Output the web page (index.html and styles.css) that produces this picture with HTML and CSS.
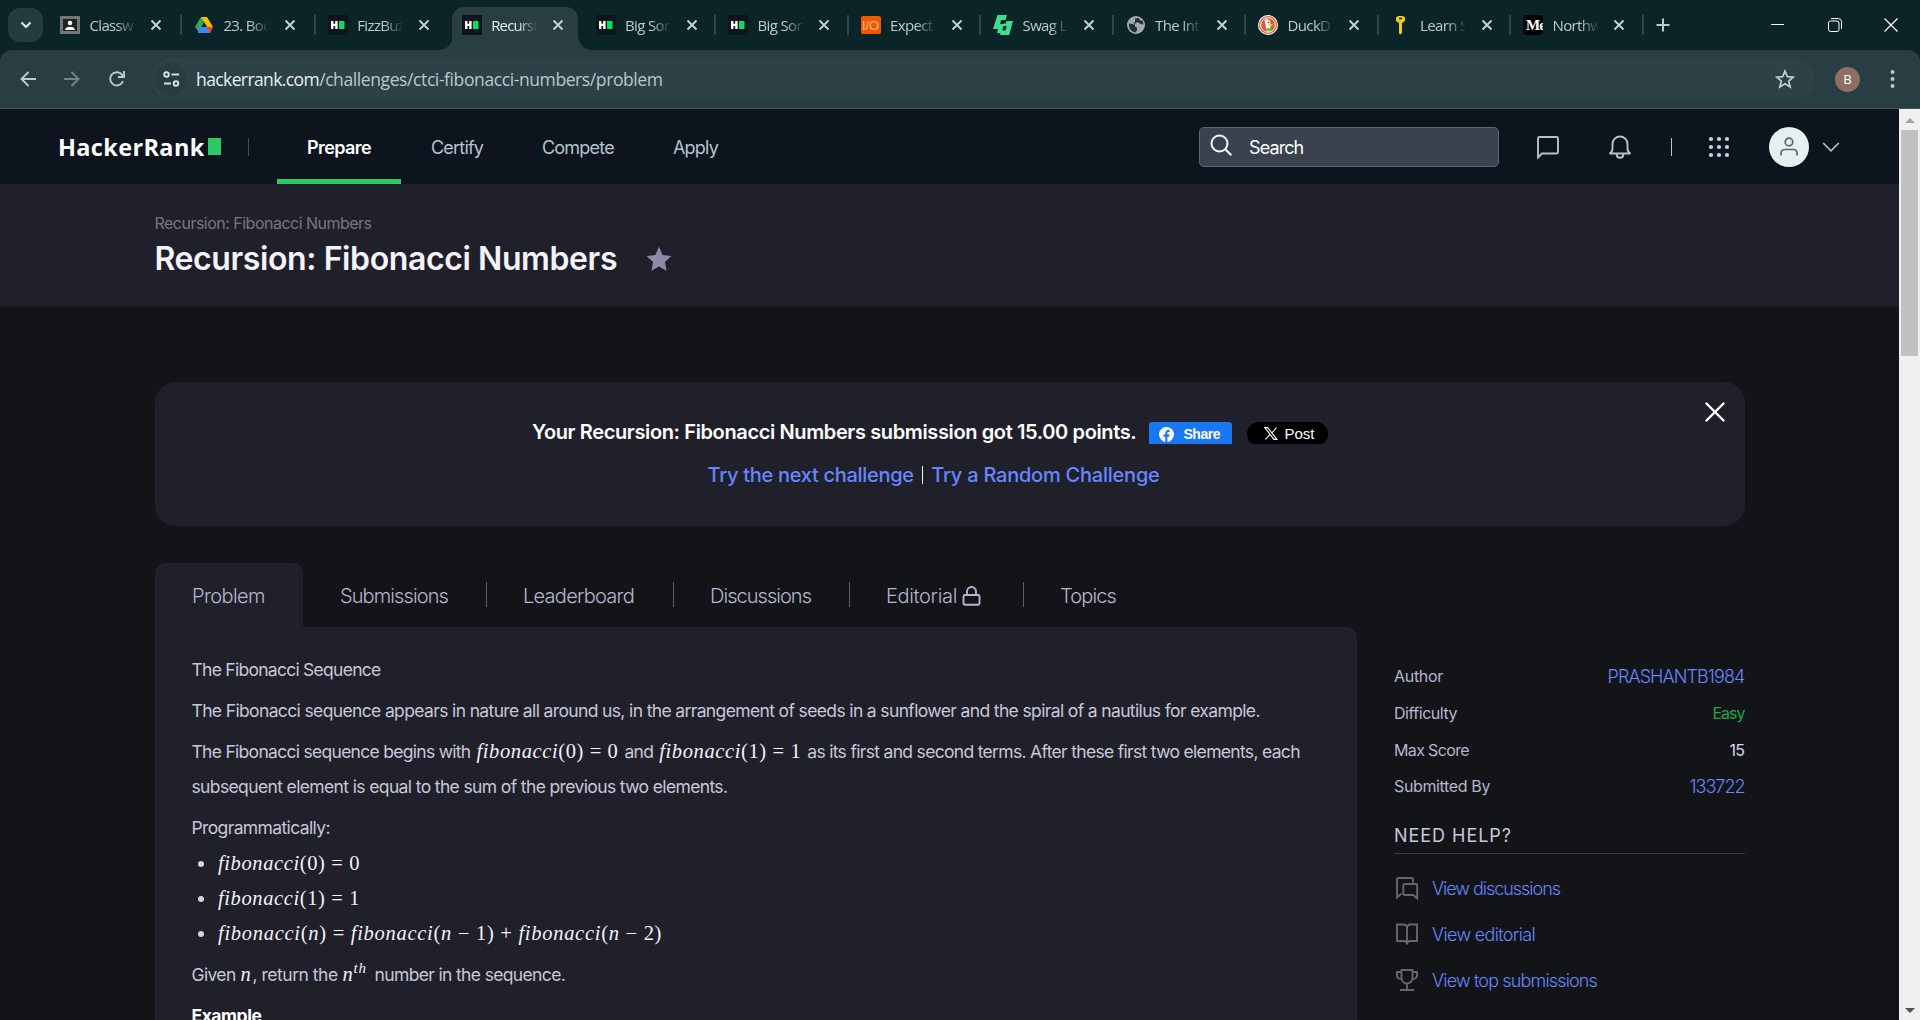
FILE: index.html
```html
<!DOCTYPE html>
<html lang="en">
<head>
<meta charset="utf-8">
<title>Recursion: Fibonacci Numbers | HackerRank</title>
<link rel="stylesheet" href="styles.css">
</head>
<body>
<svg class="defs" width="0" height="0">
  <symbol id="x" viewBox="0 0 12 12"><path d="M1.5 1.5l9 9M10.5 1.5l-9 9" stroke="currentColor" stroke-width="1.9" fill="none"/></symbol>
  <symbol id="hr" viewBox="0 0 20 20"><path fill="#0d141e" d="M0 0h20v20H0z"/><path fill="#fff" d="M3 6h2.4v2.8h1.8V6h2.4v8H7.200v-3H5.400v3H3z"/><path fill="#05e35e" d="M11 6h5.500v8H11z"/></symbol>
</svg>
<header class="browser">
  <div class="strip">
    <button class="menu"><svg width="12" height="8" viewBox="0 0 12 8"><path d="M1.500 1.500L6 6l4.500-4.500" fill="none" stroke="currentColor" stroke-width="2"/></svg></button>
    <div class="tabs">
      <div class="tab"><svg class="fav" viewBox="0 0 20 20"><path fill="#737679" d="M0 1h20v18H0z"/><path fill="#222" d="M3 4h14v12H3z"/><circle cx="10" cy="8" r="2.300" fill="#fff"/><path fill="#fff" d="M5 15c0-4.500 10-4.500 10 0z"/></svg><span class="name">Classw</span><svg class="close"><use href="#x"/></svg></div>
      <div class="tab"><svg class="fav" viewBox="0 0 20 20"><path fill="#34a853" d="M7 2h6L5.500 18 1 12z"/><path fill="#188038" d="M7 2h6l-3 5.500z"/><path fill="#fbbc04" d="M7 2h6l6 10h-6z"/><path fill="#4285f4" d="M4 12h15l-3 6H4z"/><path fill="#ea4335" d="M13 12h6l-3 6z"/><path fill="#0b2428" d="M10 7.500l2.800 4.500H7.200z"/></svg><span class="name">23. Boo</span><svg class="close"><use href="#x"/></svg></div>
      <div class="tab nosep"><svg class="fav"><use href="#hr"/></svg><span class="name">FizzBuz</span><svg class="close"><use href="#x"/></svg></div>
      <div class="tab active"><svg class="fav"><use href="#hr"/></svg><span class="name">Recursi</span><svg class="close"><use href="#x"/></svg></div>
      <div class="tab"><svg class="fav"><use href="#hr"/></svg><span class="name">Big Sor</span><svg class="close"><use href="#x"/></svg></div>
      <div class="tab"><svg class="fav"><use href="#hr"/></svg><span class="name">Big Sor</span><svg class="close"><use href="#x"/></svg></div>
      <div class="tab"><span class="fav io">I/O</span><span class="name">Expect</span><svg class="close"><use href="#x"/></svg></div>
      <div class="tab"><svg class="fav" viewBox="0 0 20 20"><path fill="#3ddc91" d="M4.500 0H14l-1.500 5H8.200L7 9h4l-2.500 9H4l1-4H0zM13.500 6H20l-3.800 14H7l1.200-4.500h4.300l1.200-4.500H9.800l.8-2.500h2.300z"/></svg><span class="name">Swag L</span><svg class="close"><use href="#x"/></svg></div>
      <div class="tab"><svg class="fav" viewBox="0 0 20 20"><circle cx="10" cy="10" r="9" fill="#a5a9ae"/><path fill="#203236" d="M3 8.500l6 1v2l2 1v3l-2 2C5 16.500 2.500 13 3 8.500zM9 3.500l4-.5 1 2.500h2.500l1 4-3-.5-2-1.500h-2L8.500 9 7 7.500h2z"/></svg><span class="name">The Int</span><svg class="close"><use href="#x"/></svg></div>
      <div class="tab"><svg class="fav" viewBox="0 0 20 20"><circle cx="10" cy="10" r="10" fill="#fff"/><circle cx="10" cy="10" r="9" fill="#de5833"/><circle cx="10" cy="10" r="7.300" fill="none" stroke="#fff" stroke-width="1"/><path fill="#fff" d="M6.500 5c2-1.500 6-.5 6 4l-.5 7.500H9z"/><path fill="#fdd20a" d="M10 9.500l4.500-.8v2L10.500 11.500z"/><path fill="#4cba3c" d="M9 13l5 .5v2.500l-5-.5z"/><circle cx="10.500" cy="7.500" r=".8" fill="#2d4f8e"/></svg><span class="name">DuckD</span><svg class="close"><use href="#x"/></svg></div>
      <div class="tab"><svg class="fav" viewBox="0 0 20 20"><path fill="#f2cb13" fill-rule="evenodd" d="M5 2.500L7 1h5l2 1.500V6l-3 2v10l-1.500 1.500L8 18.500V8L5 6zM8 2.800v1.500h3V2.800z"/></svg><span class="name">Learn S</span><svg class="close"><use href="#x"/></svg></div>
      <div class="tab"><span class="fav me">Me</span><span class="name">Northw</span><svg class="close"><use href="#x"/></svg></div>
    </div>
    <svg class="plus" width="14" height="14" viewBox="0 0 14 14"><path d="M7 .5v13M.5 7h13" stroke="currentColor" stroke-width="2"/></svg>
    <div class="win">
      <svg width="14" height="14" viewBox="0 0 14 14"><path d="M0 6.500h13" stroke="#fff"/></svg>
      <svg width="14" height="14" viewBox="0 0 14 14" fill="none" stroke="#fff"><rect x=".5" y="3" width="10.500" height="10.500" rx="2"/><path d="M3 .6h7.500q3 0 3 3V11"/></svg>
      <svg width="14" height="14" viewBox="0 0 14 14"><path d="M.5.5l13 13M13.500.5l-13 13" stroke="#fff" stroke-width="1.200"/></svg>
    </div>
  </div>
  <div class="toolbar">
    <svg class="bk" width="16" height="16" viewBox="0 0 16 16"><path d="M8.500 1L1.500 8l7 7M1.500 8H16" fill="none" stroke="currentColor" stroke-width="1.900"/></svg>
    <svg class="fw" width="16" height="16" viewBox="0 0 16 16"><path d="M7.500 1l7 7-7 7M14.500 8H0" fill="none" stroke="currentColor" stroke-width="1.900"/></svg>
    <svg class="rl" width="16" height="16" viewBox="0 0 16 16"><path d="M14 10.200A6.600 6.600 0 1 1 13 3.700L15 6M15 0v6H9" fill="none" stroke="currentColor" stroke-width="1.900"/></svg>
    <div class="omni">
      <span class="site"><svg width="17" height="16" viewBox="0 0 17 16" fill="none" stroke="currentColor" stroke-width="1.900"><circle cx="3.500" cy="3.500" r="2.300"/><path d="M8.500 3.500H16M1 12.500h7"/><circle cx="13" cy="12.500" r="2.300"/></svg></span>
      <span class="url"><span class="host">hackerrank.com</span><i>/challenges/ctci-fibonacci-numbers/problem</i></span>
      <svg class="bm" width="20" height="20" viewBox="0 0 20 20"><path d="M10 2l2.300 5.600 6 .5-4.600 3.900 1.500 6L10 14.800 4.800 18l1.500-6-4.600-3.900 6-.5z" fill="none" stroke="currentColor" stroke-width="1.700"/></svg>
    </div>
    <span class="profile">B</span>
    <svg class="more" width="5" height="18" viewBox="0 0 5 18" fill="currentColor"><circle cx="2.500" cy="2" r="2"/><circle cx="2.500" cy="9" r="2"/><circle cx="2.500" cy="16" r="2"/></svg>
  </div>
</header>
<div class="view">
<div class="page">
  <nav class="nav">
    <div class="logo"><b>HackerRank</b><i></i></div>
    <span class="bar1"></span>
    <a class="on">Prepare</a>
    <a class="cert">Certify</a>
    <a class="comp">Compete</a>
    <a class="appl">Apply</a>
    <div class="search"><svg width="22" height="22" viewBox="0 0 22 22" fill="none" stroke="#fff" stroke-width="2"><circle cx="9.500" cy="9.500" r="8"/><path d="M15.300 15.300l6 6"/></svg><span>Search</span></div>
    <svg class="msg" width="24" height="24" viewBox="0 0 24 24"><path d="M2 22.500V3.500q0-1.500 1.500-1.500h17q1.500 0 1.500 1.500v13.500q0 1.500-1.500 1.500H6z" fill="none" stroke="currentColor" stroke-width="1.900"/></svg>
    <svg class="bell" width="24" height="24" viewBox="0 0 24 24" fill="none" stroke="currentColor" stroke-width="1.900"><path d="M1.500 18.500q3-1.500 3-5V9a7.500 7.500 0 0 1 15 0v4.500q0 3.500 3 5zM8.700 19.500q0 3.300 3.300 3.300t3.300-3.300"/></svg>
    <span class="bar2"></span>
    <svg class="grid" width="22" height="22" viewBox="0 0 22 22" fill="none" stroke="#c5d3de" stroke-width="4.200" stroke-linecap="round"><path d="M3 3h0M11 3h0M19 3h0M3 11h0M11 11h0M19 11h0M3 19h0M11 19h0M19 19h0"/></svg>
    <span class="user"><svg width="18" height="19" viewBox="0 0 18 19" fill="none" stroke="#576871" stroke-width="1.700"><circle cx="9" cy="5" r="3.800"/><path d="M1 18.500v-2q0-4 4-4h8q4 0 4 4v2"/></svg></span>
    <svg class="chev" width="18" height="10" viewBox="0 0 18 10"><path d="M1.200 1L9 8.800 16.800 1" fill="none" stroke="currentColor" stroke-width="1.600"/></svg>
  </nav>
  <section class="head">
    <div class="crumb">Recursion: Fibonacci Numbers</div>
    <h1><span>Recursion: Fibonacci Numbers</span><svg width="26" height="26" viewBox="0 0 26 26"><path fill="#8d8ba8" d="M13 .8l3.600 8.100 8.800 1-6.500 6 1.700 8.900L13 20.400l-7.600 4.400 1.700-8.900-6.500-6 8.800-1z"/></svg></h1>
  </section>
  <section class="banner">
    <div class="got"><span class="result">Your Recursion: Fibonacci Numbers submission got 15.00 points.</span>
      <span class="share"><svg width="15" height="15" viewBox="0 0 15 15"><circle cx="7.500" cy="7.500" r="7.500" fill="#fff"/><path fill="#1877f2" d="M6.300 15V9.700H4.400V7.500h1.900V5.900c0-2 1.200-3 2.900-3l1.500.1v1.900H9.600c-1 0-1.200.5-1.200 1.200v1.400h2.200l-.4 2.200H8.400V15z"/></svg>Share</span>
      <span class="post"><svg width="14" height="13" viewBox="0 0 14 13"><path d="M.8.600h2.900l9.200 11.800H10zM12.600.600L7.800 6M6 7.600L1.400 12.400" fill="none" stroke="#fff" stroke-width="1.100"/></svg>Post</span>
    </div>
    <div class="next"><a class="try">Try the next challenge</a><i></i><a class="random">Try a Random Challenge</a></div>
    <svg class="dismiss" width="20" height="20" viewBox="0 0 20 20"><path d="M1.500 1.500l17 17M18.500 1.500l-17 17" stroke="#fff" stroke-width="2.400" stroke-linecap="round"/></svg>
  </section>
  <div class="sub">
    <a class="cur">Problem</a>
    <a class="subs">Submissions</a>
    <a class="lead">Leaderboard</a>
    <a class="disc">Discussions</a>
    <a class="edit">Editorial<svg width="20" height="20" viewBox="0 0 20 20" fill="none" stroke="currentColor" stroke-width="1.900"><rect x="1.500" y="9" width="16" height="9.800" rx="1.500"/><path d="M5 9V5.500a4.500 4.500 0 0 1 9 0V9"/></svg></a>
    <a class="topics">Topics</a>
  </div>
  <div class="cols">
    <article class="card">
      <p class="intro">The Fibonacci Sequence</p>
      <p class="nature">The Fibonacci sequence appears in nature all around us, in the arrangement of seeds in a sunflower and the spiral of a nautilus for example.</p>
      <p class="mix terms"><span>The Fibonacci sequence begins with</span><em><i>fibonacci</i>(0) = 0</em><span class="and">and</span><em><i>fibonacci</i>(1) = 1</em><span class="first">as its first and second terms. After these first two elements, each</span></p>
      <p>subsequent element is equal to the sum of the previous two elements.</p>
      <p class="prog">Programmatically:</p>
      <ul>
        <li><em><i>fibonacci</i>(0) = 0</em></li>
        <li><em><i>fibonacci</i>(1) = 1</em></li>
        <li><em class="rec"><i>fibonacci</i>(<i>n</i>) = <i>fibonacci</i>(<i>n</i> − 1) + <i>fibonacci</i>(<i>n</i> − 2)</em></li>
      </ul>
      <p class="mix given"><span>Given</span><em><i>n</i></em><span class="ret">, return the</span><em><i>n<sup>th</sup></i></em><span>number in the sequence.</span></p>
      <p><b>Example</b></p>
    </article>
    <aside class="side">
      <div class="row"><span class="author">Author</span><a class="handle">PRASHANTB1984</a></div>
      <div class="row"><span>Difficulty</span><span class="easy">Easy</span></div>
      <div class="row"><span class="max">Max Score</span><span class="score">15</span></div>
      <div class="row"><span class="by">Submitted By</span><a class="count">133722</a></div>
      <h4>NEED HELP?</h4>
      <a class="help talk"><svg width="24" height="24" viewBox="0 0 24 24" fill="none" stroke="currentColor" stroke-width="1.900"><path d="M18 6.500V3.500Q18 2 16.500 2h-13Q2 2 2 3.500v18L6.500 17.500M9.500 8h11.500q1.200 0 1.200 1.200v13.300l-4-3.500H9.500q-1.200 0-1.200-1.200V9.200q0-1.200 1.200-1.200z"/></svg>View discussions</a>
      <a class="help book"><svg width="24" height="24" viewBox="0 0 24 24" fill="none" stroke="currentColor" stroke-width="1.900"><path d="M12 22.500q0-3.500-3.500-3.500H2V2.500h6.500Q12 2.500 12 6v16.500q0-3.500 3.500-3.500H22V2.500h-6.500Q12 2.500 12 6"/></svg>View editorial</a>
      <a class="help cup"><svg width="24" height="24" viewBox="0 0 24 24" fill="none" stroke="currentColor" stroke-width="1.900"><path d="M6.500 2h11v8a5.500 5.500 0 0 1-11 0zM6.500 4H2v3.500Q2 11 6.500 11M17.500 4H22v3.500q0 3.500-4.500 3.500M12 15.500V21M5 22h14"/></svg>View top submissions</a>
    </aside>
  </div>
</div>
<div class="scroll"><span class="up"></span><span class="thumb"></span><span class="down"></span></div>
</div>
</body>
</html>
```
FILE: styles.css
```css
* { box-sizing: border-box; }
body { margin: 0; width: 1920px; height: 1020px; overflow: hidden; background: #131418; font-family: Inter, "Liberation Sans", sans-serif; color: #c9c7d9; white-space: nowrap; }
svg { display: block; flex: none; }
.defs { position: absolute; }
i, em { font-style: normal; }

/* Browser chrome */
.browser { background: #0b2428; height: 109px; font-family: "Open Sans", "Noto Sans", sans-serif; color: #b5cdce; }
.strip { display: flex; height: 50px; align-items: center; padding-left: 8px; }
.menu { width: 35px; height: 34px; border: 0; border-radius: 12px; background: #223c40; color: #e2eeee; display: grid; place-items: center; padding: 0; }
.tabs { display: flex; height: 50px; margin-left: 4px; }
.tab { width: 132.500px; height: 50px; display: flex; align-items: center; padding-left: 13px; font-size: 15px; position: relative; }
.tab:nth-child(-n+4) { width: 133.900px; }
.tab::after { content: ""; position: absolute; right: -1px; top: 15px; width: 2px; height: 20px; background: #29484c; }
.tab.nosep::after { display: none; }
.fav { width: 20px; height: 20px; flex: none; }
.name { width: 45px; margin-left: 9.500px; overflow: hidden; letter-spacing: -0.650px; -webkit-mask-image: linear-gradient(90deg, #000 60%, transparent 103%); mask-image: linear-gradient(90deg, #000 60%, transparent 103%); }
.close { width: 12px; height: 12px; margin-left: 15.500px; color: #c2d4d4; }
.io { background: #ef5b00; color: #ffb98f; font: 13px/20px "Liberation Sans", sans-serif; text-align: center; height: 18px; border-radius: 2px; }
.me { background: #000; color: #fff; font: bold 15px/20px "Liberation Serif", serif; border-radius: 4px; padding-left: 3px; overflow: hidden; letter-spacing: -1px; }
.tab.active { color: #e6f0f0; }
.tab.active .name { letter-spacing: -0.850px; }
.tab.active > * { position: relative; }
.tab.active::before { content: ""; position: absolute; left: 3.500px; right: 4.500px; top: 7px; bottom: 0; background: #283e43; border-radius: 12px 12px 0 0; }
.tab.active::after { left: -10px; right: auto; top: 36px; width: 153px; height: 14px; background: radial-gradient(circle at 0 0, transparent 13.500px, #283e43 14px) left / 14px 14px no-repeat, radial-gradient(circle at 100% 0, transparent 13.500px, #283e43 14px) 139px 0 / 14px 14px no-repeat; }
.plus { margin-left: 13.500px; }
.win { display: flex; gap: 42.500px; margin-left: auto; padding-right: 22px; }
.toolbar { display: flex; align-items: center; height: 59px; background: #283e43; border-bottom: 1px solid #435659; border-radius: 12px 12px 0 0; padding-left: 20px; color: #b5cdce; }
.fw { margin-left: 28px; color: #6f8688; }
.rl { margin-left: 29px; margin-right: 26px; }
.omni { width: 1664px; height: 42px; border-radius: 21px; background: #2c4246; display: flex; align-items: center; padding-left: 4px; }
.site { width: 32px; height: 32px; border-radius: 16px; background: #273d42; display: grid; place-items: center; color: #d6e2e2; }
.url { margin-left: 9px; font-size: 17.500px; color: #e8f0f0; display: flex; letter-spacing: -0.340px; }
.url .host { letter-spacing: -0.600px; }
.url i { color: #b9c9ca; letter-spacing: -0.400px; }
.bm { margin-left: auto; margin-right: 20px; color: #c6cfcf; }
.profile { width: 25px; height: 25px; border-radius: 50%; background: #8f6f65; color: #fff; font-size: 13px; line-height: 25px; text-align: center; margin-left: 20px; }
.more { margin-left: 30px; }

/* Site navigation */
.view { display: flex; height: 911px; }
.page { width: 1899px; height: 911px; overflow: hidden; display: flex; flex-direction: column; }
.nav { height: 75px; flex: none; background: #0d141e; display: flex; align-items: center; padding-left: 58px; color: #b3c5cc; font-size: 18px; letter-spacing: -0.800px; }
.logo { display: flex; align-items: center; width: 164px; color: #fff; }
.logo b { font: bold 23.500px/24px "Open Sans", "Noto Sans", sans-serif; width: 150px; letter-spacing: 0.350px; }
.logo i { width: 13px; height: 17px; background: #2ec866; }
.bar1 { width: 1px; height: 18px; background: #39505c; margin: 0 28px 0 26px; }
.nav a { height: 75px; display: flex; align-items: center; padding-top: 1px; }
.nav .on { width: 124px; padding: 6px 0 0 30px; border-bottom: 5px solid #2ec866; color: #fff; font-weight: 600; letter-spacing: -0.594px; }
.cert { margin-left: 30px; width: 111px; }
.comp { width: 131px; }
.appl { width: 526px; }
.search { width: 300px; height: 40px; border: 1px solid #576871; border-radius: 5px; background: #39424e; color: #fff; display: flex; align-items: center; padding-left: 10px; gap: 17px; font-size: 18px; letter-spacing: -0.900px; }
.search svg { margin-top: -4px; }
.search span { padding-top: 2px; }
.msg { margin-left: 37px; }
.bell { margin-left: 48px; }
.bar2 { width: 1px; height: 18px; background: #b3c5cc; margin: 0 36px 0 39px; }
.user { width: 40px; height: 40px; border-radius: 50%; background: #e7eeef; margin-left: 39px; display: grid; place-items: center; }
.chev { margin-left: 13px; }

/* Title and result banner */
.head { height: 123px; flex: none; background: #20202a; padding: 28px 0 0 154.500px; }
.crumb { font-size: 16px; line-height: 22px; color: #77767f; letter-spacing: -0.515px; }
h1 { margin: 4px 0 0; font-size: 32px; line-height: 42px; font-weight: 600; color: #f4f3fb; display: flex; align-items: center; gap: 29px; letter-spacing: -0.400px; }
.banner { margin: 75px 0 0 155px; width: 1590px; height: 144px; flex: none; border-radius: 21px; background: #20202a; position: relative; font-size: 20px; }
.got { display: flex; height: 28px; padding: 0 0 0 377px; margin-top: 36px; color: #fff; font-weight: 600; align-items: center; }
.result { letter-spacing: -0.372px; }
.share, .post { display: flex; align-items: center; height: 22px; color: #fff; font-size: 14px; margin: 2px 0 0 13px; font-family: "Liberation Sans", sans-serif; }
.share { width: 83px; background: #1877f2; border-radius: 3px 3px 0 0; padding-left: 10px; gap: 9px; font-weight: bold; letter-spacing: -0.450px; padding-top: 2px; }
.post { width: 81px; background: #000; border-radius: 12px 12px 7px 7px / 12px 12px 10px 10px; margin-left: 15px; padding: 1px 0 0 17px; gap: 6px; font-size: 15px; font-weight: 400; letter-spacing: 0; }
.next { display: flex; align-items: center; height: 28px; margin: 15px 0 0 552.500px; font-weight: 500; color: #6786ff; letter-spacing: -0.290px; }
.random { letter-spacing: -0.230px; }
.next i { width: 1.500px; height: 18px; background: #f4f3fb; margin: 0 8px; }
.dismiss { position: absolute; right: 20px; top: 20px; }

/* Challenge tabs */
.sub { display: flex; height: 64px; flex: none; margin: 37px 0 0 155px; font-size: 20px; font-weight: 300; color: #b7b5cf; }
.sub a { display: flex; align-items: center; padding: 2px 38px 0 37px; position: relative; }
.sub a + a + a::before { content: ""; position: absolute; left: 0; top: 19px; width: 1px; height: 25px; background: #5f5e6d; }
.sub .cur { background: #20202a; border-radius: 10px 10px 0 0; width: 148px; letter-spacing: -0.576px; }
.subs { width: 183px; letter-spacing: -0.895px; }
.lead { width: 187px; letter-spacing: -0.733px; }
.disc { width: 176px; letter-spacing: -0.963px; }
.edit { width: 174px; gap: 5px; letter-spacing: -0.332px; }
.topics { letter-spacing: -0.872px; }

/* Problem statement */
.cols { display: flex; flex: 1; margin-left: 155px; }
.card { width: 1202px; background: #20202a; border-radius: 0 10px 0 0; padding: 26px 0 0 36.500px; font-size: 17.500px; line-height: 33px; letter-spacing: -0.628px; }
.card p { margin: 0 0 6px; height: 35px; }
.card .intro { letter-spacing: -0.732px; }
.card .nature { letter-spacing: -0.635px; }
.card .mix { display: flex; gap: 6px; }
.card .terms { letter-spacing: -0.708px; margin: 0; }
.terms .first { letter-spacing: -0.682px; }
.card .prog { margin: 0; }
.card em { font-family: "Liberation Serif", serif; font-size: 20.500px; color: #f3f2f8; letter-spacing: 0.608px; }
.card .rec { letter-spacing: 0.715px; }
.card em i { font-style: italic; }
.card .given { margin: 7px 0 6px; gap: 0; letter-spacing: -0.650px; }
.given .ret { letter-spacing: -0.495px; }
.given em:nth-child(2) { margin-left: 5px; width: 12px; }
.given em:nth-child(4) { margin-left: 5px; width: 32px; }
sup { font-size: 15px; line-height: 0; vertical-align: 8px; letter-spacing: .8px; }
.card b { color: #fff; letter-spacing: -0.440px; }
ul { margin: 0; padding: 0; list-style: none; }
li { height: 35px; display: flex; align-items: center; }
li::before { content: ""; width: 6px; height: 6px; border-radius: 3px; background: #d4d2e4; margin: 0 14.500px 0 6px; }

/* Sidebar */
.side { width: 351px; margin-left: 37px; padding-top: 31px; }
.row { display: flex; justify-content: space-between; align-items: center; height: 36.700px; padding-right: 0.500px; font-size: 16px; color: #b7b5cf; letter-spacing: -0.477px; }
.row a { font-size: 18px; }
.author { letter-spacing: -0.302px; }
.handle { letter-spacing: -0.900px; }
.easy { color: #1ba94c; letter-spacing: -1px; }
.max { letter-spacing: -0.641px; }
.score { color: #d8d6e6; letter-spacing: -0.600px; }
.by { letter-spacing: -0.368px; }
.count { letter-spacing: -1px; }
.side a { font-weight: 300; color: #6786ff; }
h4 { margin: 17px 0 12px; height: 32px; line-height: 28px; padding-bottom: 2px; border-bottom: 1px solid #393a40; font-size: 18px; font-weight: 400; letter-spacing: 0.967px; }
.side .help { display: flex; align-items: center; height: 46px; font-size: 18px; gap: 13px; padding-left: 1px; }
.help svg { color: #666672; margin-top: -2px; }
.talk { letter-spacing: -1.030px; }
.book { letter-spacing: -0.676px; }
.cup { letter-spacing: -0.846px; }

/* Page scrollbar */
.scroll { width: 21px; background: #f0f0f0; display: flex; flex-direction: column; align-items: center; padding: 9px 0 7px; }
.up { border: 5px solid transparent; border-top: 0; border-bottom-color: #a3a3a3; }
.thumb { width: 17px; height: 226px; background: #c1c1c1; margin-top: 7px; }
.down { border: 5px solid transparent; border-bottom: 0; border-top-color: #505050; margin-top: auto; }
```
